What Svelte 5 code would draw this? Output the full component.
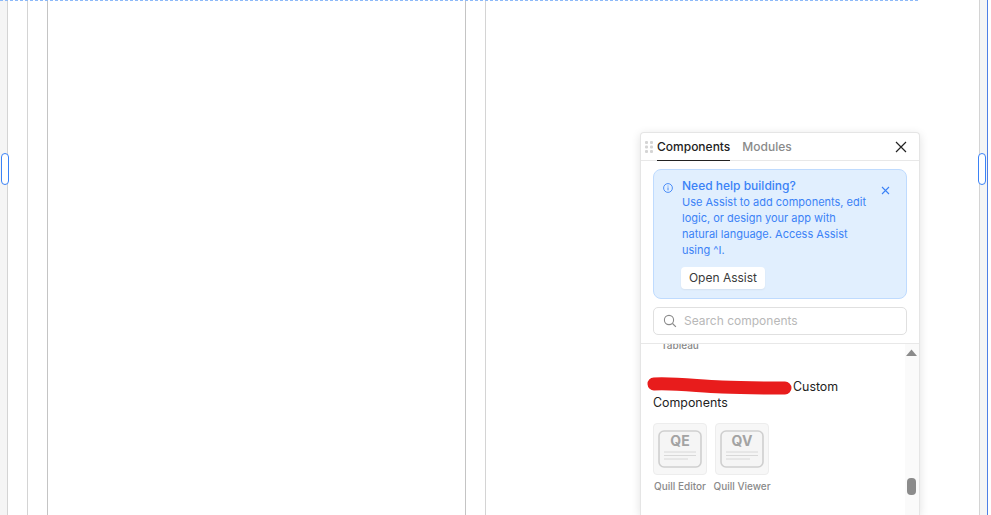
<script>
  const cards = [
    { name: "Quill Editor", code: "QE" },
    { name: "Quill Viewer", code: "QV" }
  ];
</script>

<div class="page">
  <div class="gutter"></div>
  <div class="canvas">
    <div class="col narrow"></div>
    <div class="col narrow"></div>
    <div class="col wide"></div>
    <div class="col narrow strong"></div>
    <div class="col rest"></div>
  </div>
  <div class="gutter"></div>
  <div class="edge"></div>

  <div class="dashed"></div>
  <div class="handle left"></div>
  <div class="handle right"></div>

  <aside class="panel">
    <header class="tabs">
      <svg class="grip" width="8" height="12" viewBox="0 0 8 12">
        <g fill="#d4d4d4">
          <rect x="0" y="0" width="3" height="3" rx="1" />
          <rect x="5" y="0" width="3" height="3" rx="1" />
          <rect x="0" y="4.5" width="3" height="3" rx="1" />
          <rect x="5" y="4.5" width="3" height="3" rx="1" />
          <rect x="0" y="9" width="3" height="3" rx="1" />
          <rect x="5" y="9" width="3" height="3" rx="1" />
        </g>
      </svg>
      <span class="tab active">Components</span>
      <span class="tab">Modules</span>
      <svg class="close" width="12" height="12" viewBox="0 0 12 12">
        <path d="M1 1l10 10M11 1L1 11" stroke="#222" stroke-width="1.2" fill="none" />
      </svg>
    </header>

    <div class="notice">
      <svg class="info" width="10" height="10" viewBox="0 0 10 10">
        <circle cx="5" cy="5" r="4.4" stroke="#3b82f6" stroke-width="0.9" fill="none" />
        <path d="M5 4.4v3M5 2.6v0.9" stroke="#3b82f6" stroke-width="0.9" fill="none" />
      </svg>
      <div class="notice-body">
        <strong>Need help building?</strong>
        <p>Use Assist to add components, edit logic, or design your app with natural language. Access Assist using ^I.</p>
        <button>Open Assist</button>
      </div>
      <svg class="notice-close" width="9" height="9" viewBox="0 0 9 9">
        <path d="M1 1l7 7M8 1L1 8" stroke="#3b82f6" stroke-width="1.1" fill="none" />
      </svg>
    </div>

    <div class="search">
      <svg width="14" height="14" viewBox="0 0 14 14">
        <circle cx="6" cy="6" r="4.6" stroke="#8a8a8a" stroke-width="1.1" fill="none" />
        <path d="M9.5 9.5l3.4 3.4" stroke="#8a8a8a" stroke-width="1.1" fill="none" />
      </svg>
      <span class="placeholder">Search components</span>
    </div>

    <div class="list">
      <div class="content">
        <div class="clipped">Tableau</div>
        <h3>
          <span class="redacted">
            <svg width="146" height="22" viewBox="0 0 146 22">
              <path d="M7 8C30 7 50 10 75 11c22 1 45 1 63 1" stroke="#e81c1c" stroke-width="13" stroke-linecap="round" fill="none" />
            </svg>
          </span>Custom Components
        </h3>
        <div class="cards">
          {#each cards as card}
            <div class="card">
              <div class="tile">
                <svg width="44" height="38" viewBox="0 0 44 38">
                  <rect x="1" y="1" width="42" height="36" rx="5" fill="#f5f5f5" stroke="#cfcfcf" stroke-width="1.6" />
                  <text x="22" y="16" text-anchor="middle">{card.code}</text>
                  <path d="M6 22h32M6 25.500h32M6 29h24" stroke="#d8d8d8" stroke-width="1" fill="none" />
                </svg>
              </div>
              <span class="label">{card.name}</span>
            </div>
          {/each}
        </div>
      </div>
      <div class="scrollbar">
        <svg width="11" height="7" viewBox="0 0 11 7"><path d="M5.500 0.500L11 7H0z" fill="#8b8b8b" /></svg>
        <div class="thumb"></div>
      </div>
    </div>
  </aside>
</div>

<style>
  :global(body) {
    margin: 0;
    background: #fff;
    overflow: hidden;
  }

  .page {
    position: relative;
    display: flex;
    width: 991px;
    height: 515px;
    overflow: hidden;
    font-family: Inter, "Liberation Sans", sans-serif;
    color: #1f1f1f;
  }

  .gutter {
    width: 7px;
    flex: none;
    background: #f5f5f5;
  }

  .canvas {
    display: flex;
    width: 973px;
    flex: none;
    border-right: 1px solid #d4d4d4;
    box-sizing: border-box;
  }

  .col {
    box-sizing: border-box;
    border-left: 1px solid #d4d4d4;
    flex: none;
  }

  .narrow {
    width: 20px;
  }

  .wide {
    width: 418px;
    border-left-color: #c4c4c4;
  }

  .strong {
    border-left-color: #c4c4c4;
  }

  .rest {
    flex: 1;
  }

  .edge {
    width: 4px;
    flex: none;
    border-left: 1px solid #4f80e6;
    background: #fff;
    box-sizing: border-box;
  }

  .dashed {
    position: absolute;
    top: 0;
    left: 0;
    width: 919px;
    height: 1px;
    background: repeating-linear-gradient(90deg, #8db9f8 0 3px, transparent 3px 5px);
  }

  .handle {
    position: absolute;
    top: 153px;
    width: 6px;
    height: 30px;
    border: 1px solid #3b82f6;
    border-radius: 4px;
    background: #fff;
  }

  .handle.left {
    left: 1px;
  }

  .handle.right {
    left: 978px;
  }

  .panel {
    position: absolute;
    left: 640px;
    top: 132px;
    width: 280px;
    height: 383px;
    box-sizing: border-box;
    display: flex;
    flex-direction: column;
    background: #fff;
    border: 1px solid #e5e5e5;
    border-bottom: none;
    border-radius: 4px 4px 0 0;
    box-shadow: 0 2px 10px rgba(0, 0, 0, 0.12);
  }

  .tabs {
    position: relative;
    display: flex;
    align-items: stretch;
    gap: 12px;
    height: 28px;
    box-sizing: border-box;
    flex: none;
    padding-left: 16px;
    border-bottom: 1px solid #e8e8e8;
    font-size: 12px;
  }

  .grip {
    position: absolute;
    left: 4px;
    top: 8px;
  }

  .close {
    position: absolute;
    right: 12px;
    top: 8px;
  }

  .tab {
    line-height: 27px;
    height: 28px;
    box-sizing: border-box;
    font-weight: 500;
    color: #8a8a8a;
  }

  .tab.active {
    color: #222;
    border-bottom: 1px solid #222;
  }

  .notice {
    position: relative;
    display: flex;
    gap: 9px;
    height: 130px;
    box-sizing: border-box;
    margin: 8px 12px 0;
    padding: 8px 10px 0 9px;
    flex: none;
    background: #e1effe;
    border: 1px solid #bfdbfe;
    border-radius: 8px;
    color: #3b82f6;
    font-size: 11px;
    line-height: 16px;
  }

  .info {
    margin-top: 5px;
    flex: none;
  }

  .notice-body {
    width: 190px;
  }

  .notice-body strong {
    display: block;
    font-size: 12px;
    font-weight: 500;
  }

  .notice-body p {
    margin: 0;
  }

  .notice-body button {
    display: block;
    width: 84px;
    height: 22px;
    margin: 9px 0 0 -1px;
    padding: 0;
    border: none;
    border-radius: 4px;
    background: #fff;
    box-shadow: 0 1px 2px rgba(0, 0, 0, 0.06);
    font: inherit;
    font-size: 12px;
    line-height: 22px;
    color: #3a3a3a;
  }

  .notice-close {
    position: absolute;
    right: 16px;
    top: 16px;
  }

  .search {
    display: flex;
    align-items: center;
    gap: 7px;
    height: 28px;
    box-sizing: border-box;
    margin: 8px 12px;
    padding-left: 9px;
    flex: none;
    border: 1px solid #e0e0e0;
    border-radius: 5px;
    font-size: 12px;
    color: #b8b8b8;
  }

  .placeholder {
    line-height: 14px;
    margin-bottom: 1px;
  }

  .list {
    display: flex;
    flex: 1;
    min-height: 0;
    overflow: hidden;
    border-top: 1px solid #e8e8e8;
  }

  .content {
    flex: 1;
    padding-left: 12px;
  }

  .clipped {
    margin: -5px 0 0 8px;
    height: 12px;
    font-size: 10px;
    font-weight: 500;
    line-height: 12px;
    color: #888;
  }

  h3 {
    width: 200px;
    margin: 28px 0 0;
    font-size: 12.400px;
    font-weight: 400;
    line-height: 16px;
    color: #222;
  }

  .redacted {
    position: relative;
    display: inline-block;
    width: 140px;
    height: 16px;
    vertical-align: top;
  }

  .redacted svg {
    position: absolute;
    left: -6px;
    top: -3px;
  }

  .cards {
    display: flex;
    gap: 8px;
    margin-top: 12px;
  }

  .card {
    display: flex;
    flex-direction: column;
    align-items: center;
    width: 54px;
  }

  .tile {
    display: flex;
    align-items: center;
    justify-content: center;
    width: 54px;
    height: 52px;
    box-sizing: border-box;
    background: #f7f7f7;
    border: 1px solid #ededed;
    border-radius: 4px;
  }

  .tile text {
    font-family: Inter, "Liberation Sans", sans-serif;
    font-size: 14px;
    font-weight: 700;
    fill: #a3a3a3;
  }

  .label {
    margin-top: 4px;
    font-size: 10px;
    font-weight: 500;
    line-height: 14px;
    color: #8a8a8a;
    white-space: nowrap;
  }

  .scrollbar {
    position: relative;
    width: 14px;
    flex: none;
    background: #fafafa;
  }

  .scrollbar svg {
    position: absolute;
    left: 1px;
    top: 5px;
  }

  .thumb {
    position: absolute;
    left: 2px;
    top: 134px;
    width: 9px;
    height: 17px;
    border-radius: 4px;
    background: #8b8b8b;
  }
</style>
